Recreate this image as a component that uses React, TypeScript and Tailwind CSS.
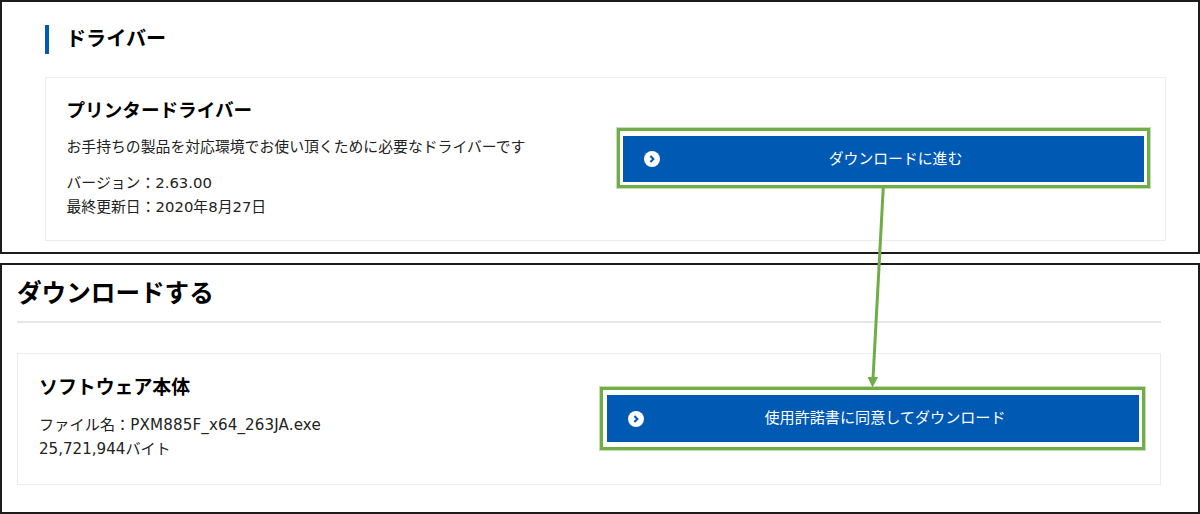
import type { ReactNode } from "react";

function ChevronBadge() {
  return (
    <svg viewBox="0 0 16 16" className="h-4 w-4 shrink-0">
      <circle cx="8" cy="8" r="8" fill="#fff" />
      <path d="M6.4 5 9.4 8l-3 3" fill="none" stroke="#0059b3" strokeWidth="2" />
    </svg>
  );
}

function Card({ className, children }: { className: string; children: ReactNode }) {
  return <div className={`flex border border-[#ececec] ${className}`}>{children}</div>;
}

function DownloadButton({ className, children }: { className: string; children: ReactNode }) {
  return (
    <div className={`shrink-0 border-3 border-[#70ad47] outline outline-[#70ad47]/40 ${className}`}>
      <button className="flex h-full w-full items-center bg-[#0059b3] pl-[21px] text-white">
        <ChevronBadge />
        <span className="flex-1 whitespace-nowrap pr-[13px] pb-px text-center">{children}</span>
      </button>
    </div>
  );
}

export default function App() {
  return (
    <div className="relative flex h-[514px] w-[1200px] flex-col gap-[9px] overflow-hidden bg-white font-['DejaVu_Sans','Noto_Sans_CJK_JP',sans-serif] text-[14.85px] leading-6 text-[#222]">
      {/* Driver listing */}
      <section className="h-[254px] shrink-0 border-2 border-[#1c1c1c] pl-[43px] pr-8 pt-[23px]">
        <h2 className="flex h-[29px] items-center border-l-4 border-[#0059b3] pb-[2px] pl-[17px] text-[20.1px] font-bold text-black">
          ドライバー
        </h2>
        <Card className="mt-[23px] h-[164px] justify-between pl-[20.5px] pr-[15px]">
          <div className="pt-[19px]">
            <h3 className="text-[18.6px] font-bold leading-7 text-black">プリンタードライバー</h3>
            <p className="mt-[10px] whitespace-nowrap">お手持ちの製品を対応環境でお使い頂くために必要なドライバーです</p>
            <p className="mt-3">バージョン：2.63.00</p>
            <p>最終更新日：2020年8月27日</p>
          </div>
          <DownloadButton className="mt-[50px] h-[60px] w-[533px] px-[3px] pb-[3px] pt-[5px]">
            ダウンロードに進む
          </DownloadButton>
        </Card>
      </section>

      {/* Download page */}
      <section className="h-[251px] shrink-0 border-2 border-[#1c1c1c] pl-[15px] pr-[37px] text-[15.1px]">
        <h1 className="flex h-[58px] items-center border-b-2 border-[#e6e6e6] pt-[2px] text-[24.6px] font-bold text-black">
          ダウンロードする
        </h1>
        <Card className="mt-[30px] h-[132px] justify-between pl-[21px] pr-[15px]">
          <div className="pt-[19px]">
            <h3 className="text-[18.9px] font-bold leading-7 text-black">ソフトウェア本体</h3>
            <p className="mt-3 tracking-[0.13px]">ファイル名：PXM885F_x64_263JA.exe</p>
            <p>25,721,944バイト</p>
          </div>
          <DownloadButton className="mt-[33px] h-[63px] w-[545px] pl-1 pr-[3px] pb-[5px] pt-[5px]">
            使用許諾書に同意してダウンロード
          </DownloadButton>
        </Card>
      </section>

      {/* Arrow from the first button to the second */}
      <svg viewBox="0 0 1200 514" className="pointer-events-none absolute inset-0 h-full w-full">
        <path d="M883.3 187 873 379" stroke="#70ad47" strokeWidth="3" fill="none" />
        <path d="M867.5 377h10.6L872.5 387.5z" fill="#70ad47" />
      </svg>
    </div>
  );
}
